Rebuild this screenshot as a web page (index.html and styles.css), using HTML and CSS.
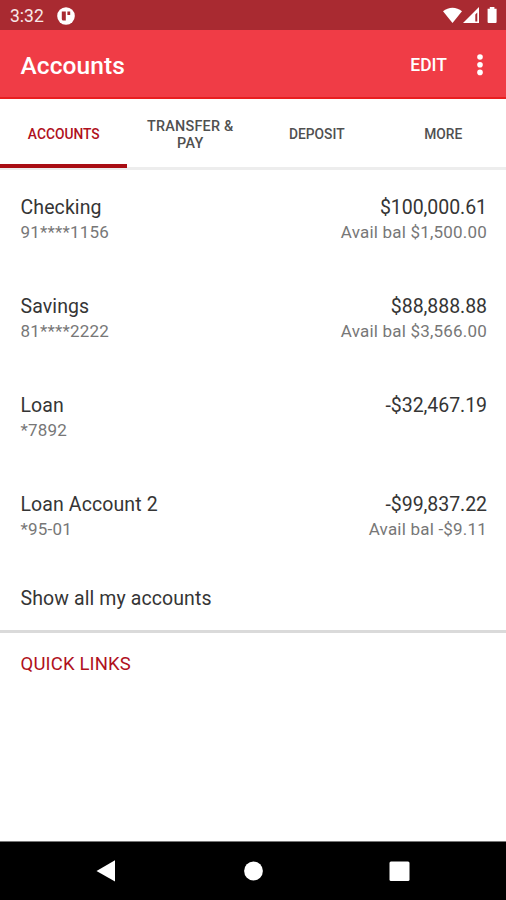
FILE: index.html
```html
<!DOCTYPE html>
<html lang="en">
<head>
<meta charset="utf-8">
<title>Accounts</title>
<link rel="stylesheet" href="styles.css">
</head>
<body>
<div class="screen">
  <div class="status">
    <span class="clock">3:32</span>
    <svg class="badge" width="18" height="18" viewBox="0 0 18 18"><circle cx="9" cy="9" r="8.8" fill="#fff"/><path d="M4.800 4.500h4v9H6.300a1.500 1.500 0 0 1-1.500-1.500zM10.400 4.500h2.800v3.600h-2.800z" fill="#a92a31"/></svg>
    <svg class="signals" width="57" height="18" viewBox="0 0 57 18"><path d="M0 4.300C5.500-.4 13.500-.4 19 4.300L9.500 16z" fill="#fff"/><path d="M36 0v16H20zM34.300 5.500v9h-2V7.500z" fill="#fff" fill-rule="evenodd"/><path d="M44.600 1.800h2.200V0h4.600v1.800h2.200V15a1 1 0 0 1-1 1h-7a1 1 0 0 1-1-1z" fill="#fff"/></svg>
  </div>
  <header class="appbar">
    <h1 class="title">Accounts</h1>
    <span class="edit">EDIT</span>
    <svg class="dots" width="6" height="22" viewBox="0 0 6 22" fill="#fff"><circle cx="3" cy="3" r="2.800"/><circle cx="3" cy="10.700" r="2.800"/><circle cx="3" cy="18.400" r="2.800"/></svg>
  </header>
  <nav class="tabs">
    <div class="tab active"><span>ACCOUNTS</span></div>
    <div class="tab wide"><span>TRANSFER &amp;<br>PAY</span></div>
    <div class="tab"><span>DEPOSIT</span></div>
    <div class="tab"><span>MORE</span></div>
  </nav>
  <main class="content">
    <section class="account">
      <div><div class="name">Checking</div><div class="sub">91****1156</div></div>
      <div class="right"><div class="amount">$100,000.61</div><div class="sub">Avail bal $1,500.00</div></div>
    </section>
    <section class="account">
      <div><div class="name">Savings</div><div class="sub">81****2222</div></div>
      <div class="right"><div class="amount">$88,888.88</div><div class="sub">Avail bal $3,566.00</div></div>
    </section>
    <section class="account">
      <div><div class="name">Loan</div><div class="sub">*7892</div></div>
      <div class="right"><div class="amount">-$32,467.19</div></div>
    </section>
    <section class="account">
      <div><div class="name">Loan Account 2</div><div class="sub">*95-01</div></div>
      <div class="right"><div class="amount">-$99,837.22</div><div class="sub">Avail bal -$9.11</div></div>
    </section>
    <div class="show-all">Show all my accounts</div>
    <div class="quick">QUICK LINKS</div>
  </main>
  <footer class="navbar">
    <svg width="506" height="58" viewBox="0 0 506 58" fill="#fff"><path d="M96.500 29 115 18.300v21.200z"/><circle cx="253.500" cy="29" r="9.400"/><rect x="389.500" y="19.500" width="20" height="19.500" rx="1.500"/></svg>
  </footer>
</div>
</body>
</html>
```
FILE: styles.css
```css
* { box-sizing: border-box; }
body { margin: 0; background: #fff; font-family: Roboto, "Liberation Sans", sans-serif; }
.screen { width: 506px; height: 900px; display: flex; flex-direction: column; overflow: hidden; }
.status { height: 30px; background: #a92a31; display: flex; align-items: center; padding: 1px 6px 0 10px; color: #f8e8e8; }
.clock { font-size: 17.5px; width: 47px; padding-top: 1px; }
.signals { margin-left: auto; }
.appbar { height: 69px; background: #f03c46; border-bottom: 2px solid #e81e20; display: flex; align-items: center; color: #fff; padding: 2px 23px 0 20.5px; }
.title { margin: 0; font-size: 24.5px; font-weight: 500; letter-spacing: 0.1px; flex: 1; padding-top: 2px; }
.edit { font-size: 17.5px; font-weight: 500; margin-right: 30px; padding-top: 1px; }
.tabs { height: 71px; display: flex; border-bottom: 3px solid #ededed; }
.tab { flex: 1; height: 69px; display: flex; align-items: center; justify-content: center; text-align: center; font-size: 13.8px; font-weight: 500; line-height: 17px; color: #505050; padding: 2px 0 0 1px; }
.tab.wide { font-size: 14.4px; letter-spacing: 0.25px; }
.tab.active { color: #b01020; border-bottom: 4px solid #a90d14; padding-top: 5px; }
.content { flex: 1; }
.account { height: 99px; padding: 26px 19px 0 20.5px; display: flex; justify-content: space-between; }
.right { text-align: right; }
.name, .amount { font-size: 19.5px; line-height: 24px; letter-spacing: 0.1px; color: #353535; }
.amount { letter-spacing: -0.05px; }
.sub { font-size: 17px; line-height: 25px; letter-spacing: 0.2px; color: #777; }
.show-all { height: 67px; padding: 21px 20.5px 0; font-size: 19.5px; line-height: 24px; letter-spacing: 0.1px; color: #353535; border-bottom: 3px solid #dadada; }
.quick { padding: 19px 20.5px 0; font-size: 18.5px; letter-spacing: 0.15px; line-height: 24px; color: #b01020; }
.navbar { height: 59px; background: #000; border-top: 1px solid #777; }
.navbar svg { display: block; }
```
